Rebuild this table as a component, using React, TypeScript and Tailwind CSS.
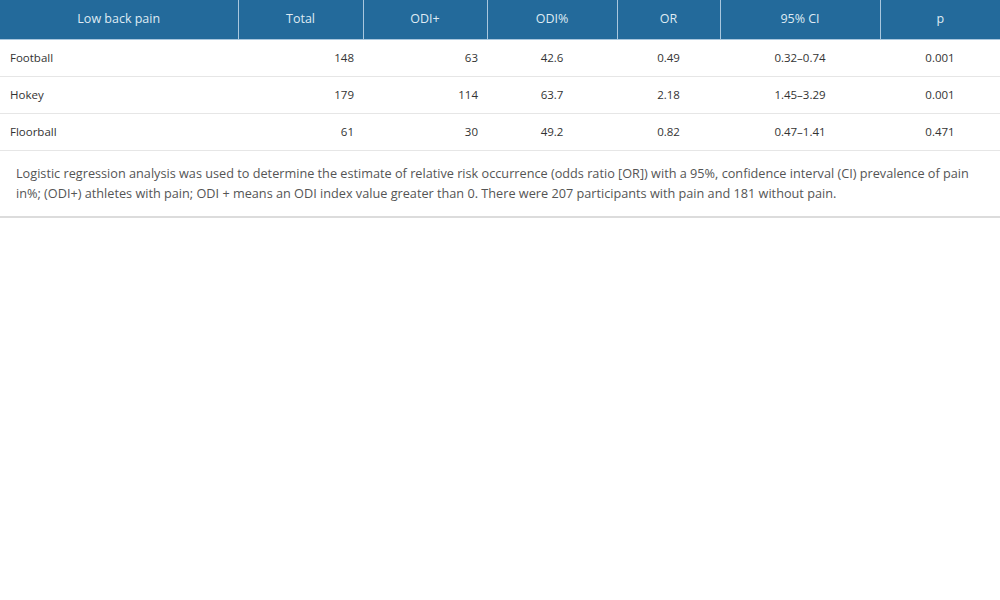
const columns = [
  { label: 'Low back pain', width: 'w-[238px]' },
  { label: 'Total', width: 'w-[125px]' },
  { label: 'ODI+', width: 'w-[124px]' },
  { label: 'ODI%', width: 'w-[130px]' },
  { label: 'OR', width: 'w-[103px]' },
  { label: '95% CI', width: 'w-[160px]' },
  { label: 'p', width: 'w-[120px]' },
];

const rows = [
  ['Football', '148', '63', '42.6', '0.49', '0.32–0.74', '0.001'],
  ['Hokey', '179', '114', '63.7', '2.18', '1.45–3.29', '0.001'],
  ['Floorball', '61', '30', '49.2', '0.82', '0.47–1.41', '0.471'],
];

function cellAlign(i: number) {
  if (i === 0) return 'text-left pl-[10px]';
  if (i === 1 || i === 2) return 'text-right pr-[9px]';
  return 'text-center';
}

export default function App() {
  return (
    <div className="w-[1000px] h-[600px] bg-white font-['Open_Sans',sans-serif]">
      <table className="w-full table-fixed border-collapse">
        <thead>
          <tr className="h-[39px] bg-[#236a9b] text-[12.5px] text-[#dfeaf3]">
            {columns.map((c, i) => (
              <th
                key={c.label}
                className={`${c.width} font-normal text-center border-b border-b-[#a9c7de] ${i > 0 ? 'border-l border-l-[#a9c7de]' : ''}`}
              >
                {c.label}
              </th>
            ))}
          </tr>
        </thead>
        <tbody>
          {rows.map((r) => (
            <tr key={r[0]} className="h-[37px] border-b border-[#e6e6e6] text-[11.5px] text-[#333]">
              {r.map((v, i) => (
                <td key={i} className={cellAlign(i)}>
                  {v}
                </td>
              ))}
            </tr>
          ))}
        </tbody>
      </table>
      <div className="px-4 pt-[12px] pb-[13px] border-b-2 border-[#dcdcdc] text-[12.7px] leading-[20px] text-[#555]">
        Logistic regression analysis was used to determine the estimate of relative risk occurrence (odds ratio [OR]) with a 95%, confidence interval (CI) prevalence of pain in%; (ODI+) athletes with pain; ODI + means an ODI index value greater than 0. There were 207 participants with pain and 181 without pain.
      </div>
    </div>
  );
}
